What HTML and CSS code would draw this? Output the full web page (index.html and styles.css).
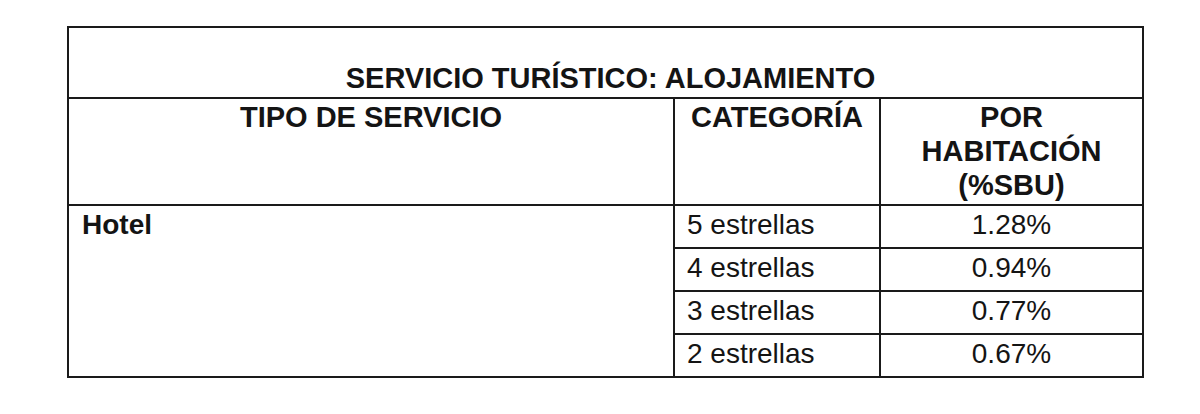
FILE: index.html
```html
<!DOCTYPE html>
<html lang="es">
<head>
<meta charset="utf-8">
<title>Servicio turístico: alojamiento</title>
<link rel="stylesheet" href="styles.css">
</head>
<body>
<div class="page">
  <table class="rates">
    <colgroup>
      <col class="c-tipo">
      <col class="c-cat">
      <col class="c-pct">
    </colgroup>
    <thead>
      <tr>
        <th class="title" colspan="3">SERVICIO TURÍSTICO: ALOJAMIENTO</th>
      </tr>
      <tr class="head">
        <th>TIPO DE SERVICIO</th>
        <th>CATEGORÍA</th>
        <th>POR<br>HABITACIÓN<br>(%SBU)</th>
      </tr>
    </thead>
    <tbody>
      <tr>
        <td class="tipo" rowspan="4">Hotel</td>
        <td class="cat">5 estrellas</td>
        <td class="pct">1.28%</td>
      </tr>
      <tr>
        <td class="cat">4 estrellas</td>
        <td class="pct">0.94%</td>
      </tr>
      <tr>
        <td class="cat">3 estrellas</td>
        <td class="pct">0.77%</td>
      </tr>
      <tr>
        <td class="cat">2 estrellas</td>
        <td class="pct">0.67%</td>
      </tr>
    </tbody>
  </table>
</div>
</body>
</html>
```

FILE: styles.css
```css
html, body {
  margin: 0;
  padding: 0;
  background: #ffffff;
}

.page {
  padding: 26px 0 0 67px;
  font-family: "Liberation Sans", Arial, sans-serif;
  color: #141414;
}

.rates {
  border-collapse: collapse;
  table-layout: fixed;
  width: 1075px;
  border: 2px solid #1a1a1a;
}

.c-tipo { width: 606px; }
.c-cat { width: 206px; }
.c-pct { width: 263px; }

.rates th,
.rates td {
  border: 2px solid #1a1a1a;
  padding: 0;
}

.rates th {
  font-size: 29px;
  font-weight: bold;
  line-height: 34px;
  text-align: center;
  vertical-align: top;
}

.rates th.title {
  height: 67px;
  vertical-align: bottom;
  padding: 0 0 2px 10px;
}

.head th {
  height: 102px;
  padding: 1px 0 2px 0;
}

.rates td {
  font-size: 28px;
  line-height: 34px;
  height: 34px;
  padding: 2px 13px 5px 12px;
  vertical-align: top;
}

.rates td.tipo {
  font-weight: bold;
  padding-left: 13px;
}

.rates td.pct {
  text-align: center;
  padding-left: 0;
  padding-right: 0;
}
```
